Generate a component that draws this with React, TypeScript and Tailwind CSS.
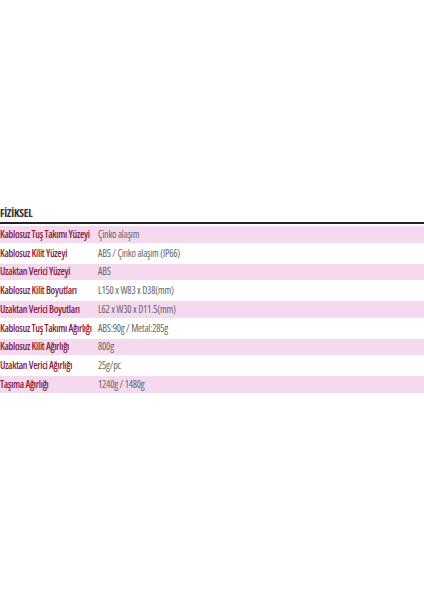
const rows: [string, string][] = [
  ['Kablosuz Tuş Takımı Yüzeyi', 'Çinko alaşım'],
  ['Kablosuz Kilit Yüzeyi', 'ABS / Çinko alaşım (IP66)'],
  ['Uzaktan Verici Yüzeyi', 'ABS'],
  ['Kablosuz Kilit Boyutları', 'L150 x W83 x D38(mm)'],
  ['Uzaktan Verici Boyutları', 'L62 x W30 x D11.5(mm)'],
  ['Kablosuz Tuş Takımı Ağırlığı', 'ABS:90g / Metal:285g'],
  ['Kablosuz Kilit Ağırlığı', '800g'],
  ['Uzaktan Verici Ağırlığı', '25g/pc'],
  ['Taşıma Ağırlığı', '1240g / 1480g'],
];

export default function App() {
  return (
    <div className="w-[424px] h-[600px] bg-white font-['Open_Sans',sans-serif] font-stretch-condensed">
      <div className="pt-[205px]">
        <h3 className="text-[11px] font-bold text-[#333] leading-[16px] tracking-[-0.3px]">FİZİKSEL</h3>
        <div className="mt-[1px] h-[2px] bg-[#222]" />
        <div className="mt-[2px] flex flex-col gap-[2px]">
          {rows.map(([label, value], i) => (
            <div
              key={label}
              className={`flex h-[16.75px] items-center text-[10px] ${i % 2 === 0 ? 'bg-[#f4d9ef]' : 'bg-white'}`}
            >
              <div className="w-[98px] shrink-0 font-semibold text-[#8c1b3c] tracking-[-0.3px] whitespace-nowrap">{label}</div>
              <div className="text-[#666] tracking-[-0.2px] whitespace-nowrap">{value}</div>
            </div>
          ))}
        </div>
      </div>
    </div>
  );
}
